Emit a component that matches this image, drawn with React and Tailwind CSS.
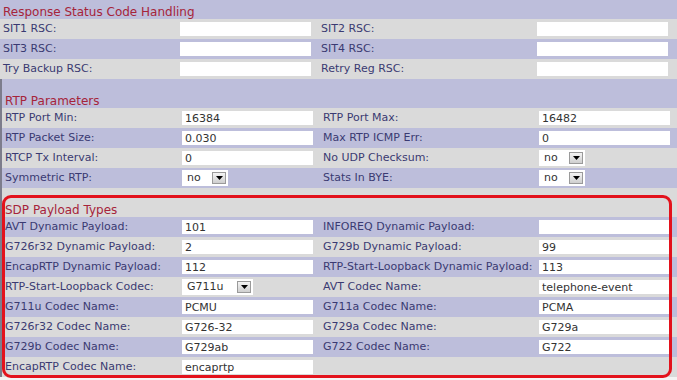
const LAV = "bg-[#bdbedb]";
const GRY = "bg-[#dadada]";

const rsc = [
  ["SIT1 RSC:", "", "SIT2 RSC:", ""],
  ["SIT3 RSC:", "", "SIT4 RSC:", ""],
  ["Try Backup RSC:", "", "Retry Reg RSC:", ""],
];

const rtp = [
  ["RTP Port Min:", "16384", "RTP Port Max:", "16482"],
  ["RTP Packet Size:", "0.030", "Max RTP ICMP Err:", "0"],
  ["RTCP Tx Interval:", "0", "No UDP Checksum:", { sel: "no" }],
  ["Symmetric RTP:", { sel: "no" }, "Stats In BYE:", { sel: "no" }],
];

const sdp = [
  ["AVT Dynamic Payload:", "101", "INFOREQ Dynamic Payload:", ""],
  ["G726r32 Dynamic Payload:", "2", "G729b Dynamic Payload:", "99"],
  ["EncapRTP Dynamic Payload:", "112", "RTP-Start-Loopback Dynamic Payload:", "113"],
  ["RTP-Start-Loopback Codec:", { sel: "G711u", wide: true }, "AVT Codec Name:", "telephone-event"],
  ["G711u Codec Name:", "PCMU", "G711a Codec Name:", "PCMA"],
  ["G726r32 Codec Name:", "G726-32", "G729a Codec Name:", "G729a"],
  ["G729b Codec Name:", "G729ab", "G722 Codec Name:", "G722"],
  ["EncapRTP Codec Name:", "encaprtp", null, null],
];

function Select({ v, wide }) {
  return (
    <div className={`h-[16px] bg-white flex items-center pl-[5px] pr-[2px] ${wide ? "w-[71px]" : "w-[46px]"}`}>
      <span className="flex-1 text-[#333]">{v}</span>
      <span className="w-[14px] h-[12px] border border-[#9a9a9a] bg-gradient-to-b from-[#f4f4f4] to-[#cfcfcf] flex items-center justify-center">
        <svg width="7" height="4" viewBox="0 0 7 4"><path d="M0 0h7L3.5 4z" fill="#000" /></svg>
      </span>
    </div>
  );
}

function Field({ v }) {
  if (v === null) return <div className="w-[131px]" />;
  if (typeof v === "object") return <div className="w-[131px]"><Select v={v.sel} wide={v.wide} /></div>;
  return (
    <div className="w-[131px] h-[14px] bg-white px-[3px] flex items-center text-[#333] leading-none">{v}</div>
  );
}

function Row({ r, bg }) {
  return (
    <div className={`h-[20px] flex items-center ${bg}`}>
      <div className="w-[180px] pl-[3px] text-[#3a3a72] whitespace-nowrap">{r[0]}</div>
      <Field v={r[1]} />
      <div className="w-[226px] pl-[10px] text-[#3a3a72] whitespace-nowrap">{r[2]}</div>
      <Field v={r[3]} />
    </div>
  );
}

function Header({ title, bg, spacer }) {
  return (
    <div className={`${bg} ${spacer ? "h-[29px]" : "h-[19px]"} flex items-end pl-[3px]`}>
      <span className="text-[12px] leading-[13px] text-[#a6243a]">{title}</span>
    </div>
  );
}

export default function App() {
  let i = 0;
  const bgNext = () => (i++ % 2 === 0 ? LAV : GRY);
  return (
    <div className="w-[677px] h-[380px] bg-[#f4f4f4] overflow-hidden relative text-[11px]" style={{ fontFamily: '"DejaVu Sans", Verdana, sans-serif' }}>
      <Header title="Response Status Code Handling" bg={bgNext()} />
      {rsc.map((r, k) => <Row key={k} r={r} bg={bgNext()} />)}
      <div className="border-l-2 border-[#7d7d8c]">
        <Header title="RTP Parameters" bg={bgNext()} spacer />
        {rtp.map((r, k) => <Row key={k} r={r} bg={bgNext()} />)}
        <Header title="SDP Payload Types" bg={bgNext()} spacer />
        {sdp.map((r, k) => <Row key={k} r={r} bg={bgNext()} />)}
      </div>
      <div className="absolute left-[2px] top-[195px] w-[670px] h-[183px] border-[3px] border-[#e3121c] rounded-[9px]" />
    </div>
  );
}
